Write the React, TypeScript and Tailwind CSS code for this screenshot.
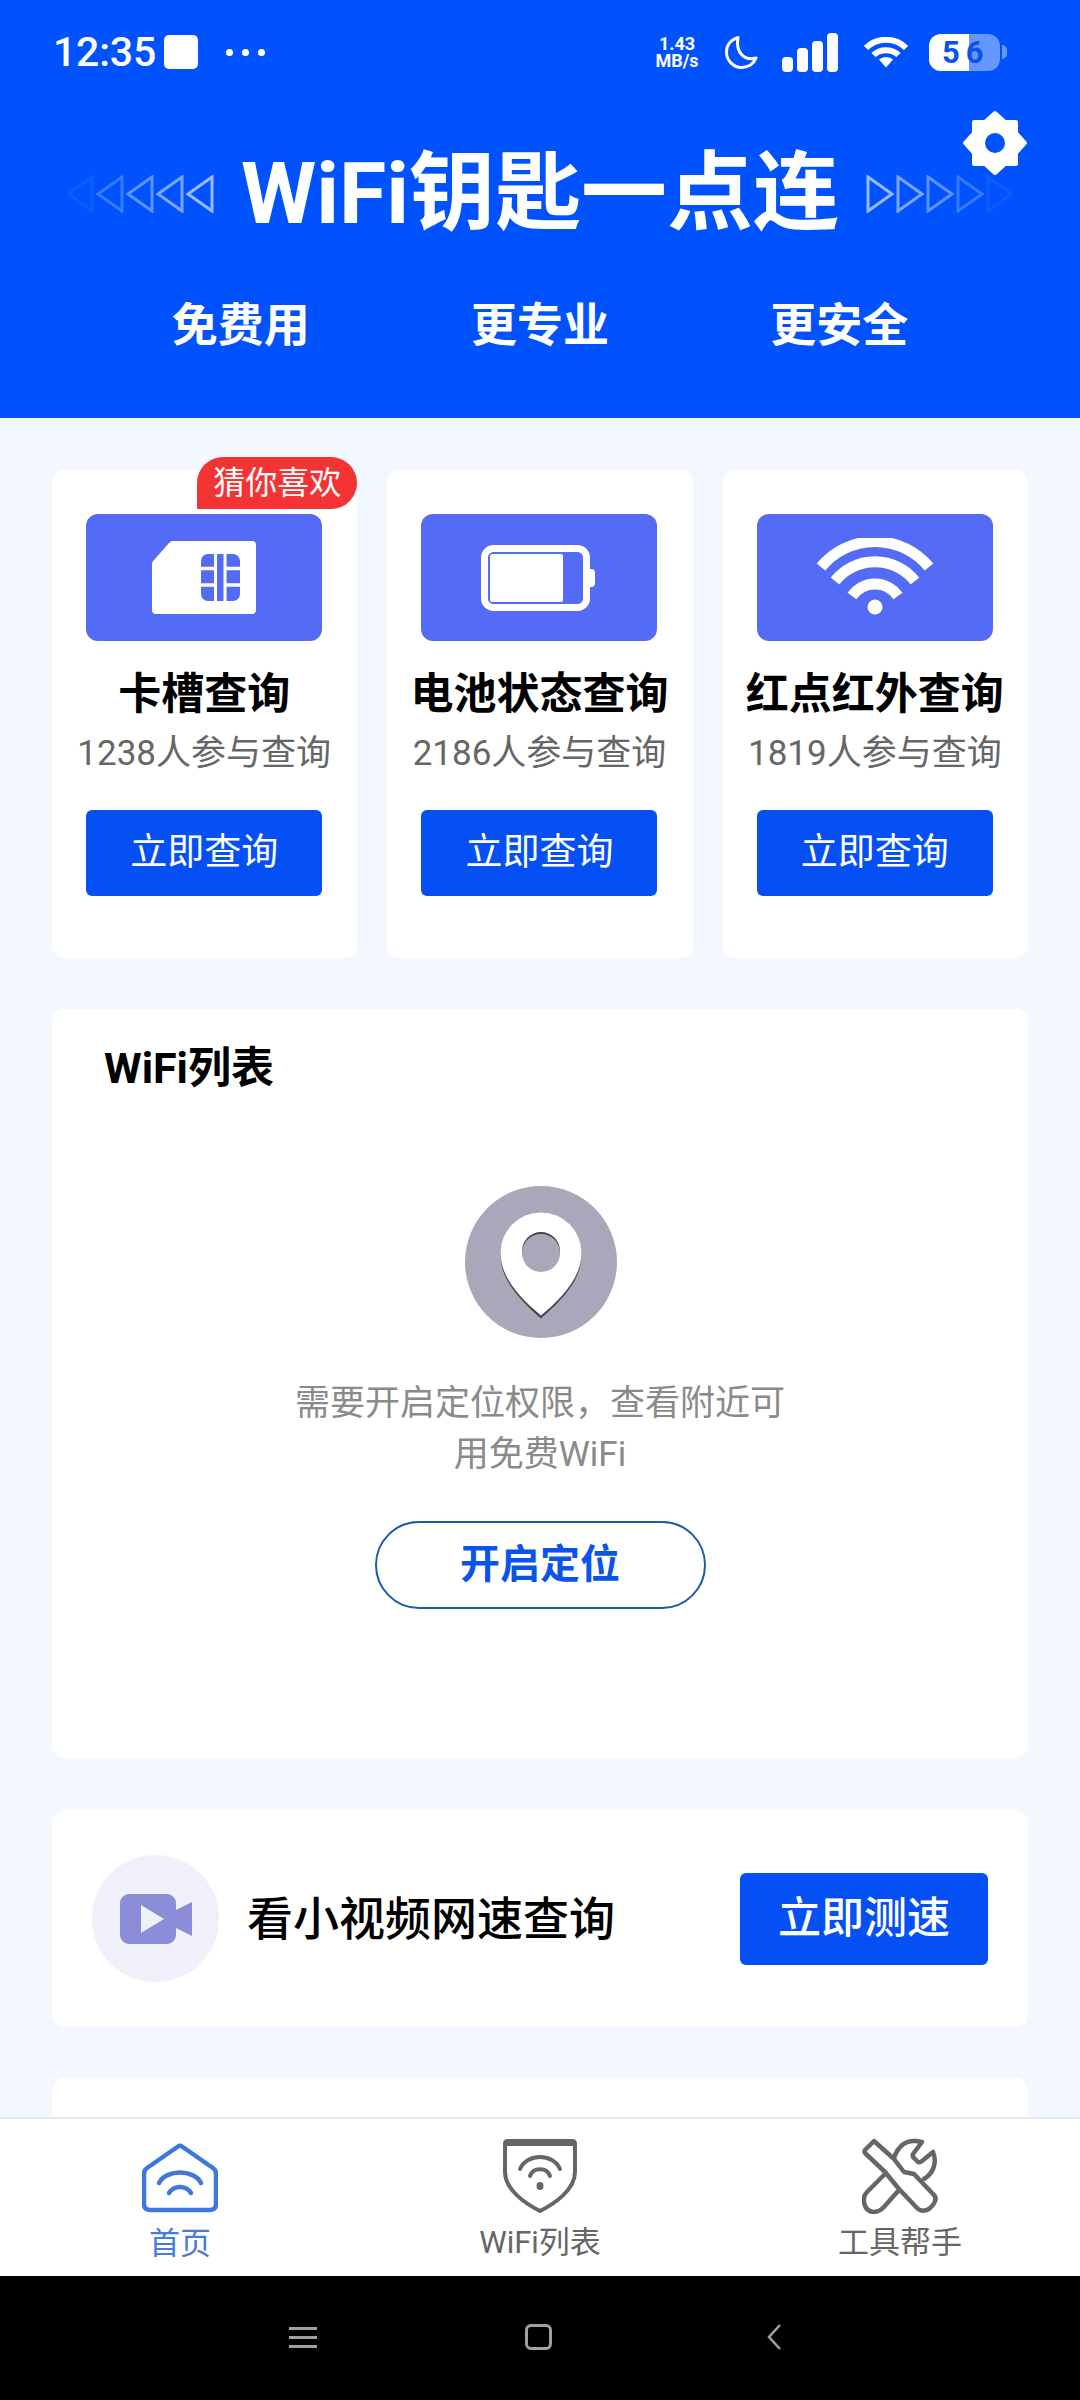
const font = { fontFamily: 'Roboto, "Noto Sans CJK SC", sans-serif' };

function Arrows({ dir }: { dir: "left" | "right" }) {
  // five outlined triangles, fading away from the title
  const ops = [0.6, 0.48, 0.36, 0.22, 0.06];
  return (
    <svg width="146" height="38" viewBox="0 0 146 38" fill="none" className="shrink-0">
      {ops.map((o, i) =>
        dir === "right" ? (
          <path key={i} d={`M${2 + i * 30} 2 L${26 + i * 30} 19 L${2 + i * 30} 36 Z`} stroke="#fff" strokeOpacity={o} strokeWidth="3" />
        ) : (
          <path key={i} d={`M${144 - i * 30} 2 L${120 - i * 30} 19 L${144 - i * 30} 36 Z`} stroke="#fff" strokeOpacity={o} strokeWidth="3" />
        )
      )}
    </svg>
  );
}

function StatusBar() {
  return (
    <div className="flex h-[104px] items-center pl-[53px] pr-[73px] text-white">
      <span className="text-[41px] font-medium leading-none tracking-[-0.2px]">12:35</span>
      <div className="ml-[8px] h-[34px] w-[34px] rounded-[5px] bg-white" />
      <div className="ml-[28px] flex gap-[9px]">
        <div className="h-[7px] w-[7px] rounded-full bg-white" />
        <div className="h-[7px] w-[7px] rounded-full bg-white" />
        <div className="h-[7px] w-[7px] rounded-full bg-white" />
      </div>
      <div className="ml-auto flex items-center">
        <div className="flex w-[46px] flex-col items-center text-[18px] font-bold leading-[17px]">
          <span>1.43</span>
          <span>MB/s</span>
        </div>
        <svg className="ml-[24px]" width="34" height="35" viewBox="0 0 34 35" fill="none">
          <path d="M14 2.5 C6 5 2 11 2.5 18 C3 26 10 33 18 32.5 C25 32 30 28 32 23 C22 26 11 19 14 2.5 Z" stroke="#fff" strokeWidth="3" strokeLinejoin="round" />
        </svg>
        <div className="ml-[24px] flex items-end gap-[4px]">
          <div className="h-[15px] w-[11px] rounded-[4px] bg-white" />
          <div className="h-[24px] w-[11px] rounded-[4px] bg-white" />
          <div className="h-[31px] w-[11px] rounded-[4px] bg-white" />
          <div className="h-[39px] w-[11px] rounded-[4px] bg-white" />
        </div>
        <svg className="ml-[26px]" width="44" height="31" viewBox="0 0 44 31" fill="none">
          <path d="M2 11 C13 0 31 0 42 11" stroke="#fff" strokeWidth="6" />
          <path d="M9.5 18 C16 11.500 28 11.500 34.500 18" stroke="#fff" strokeWidth="6" />
          <path d="M15 22.500 L22 30.500 L29 22.500 C25 19 19 19 15 22.500 Z" fill="#fff" />
        </svg>
        <div className="relative ml-[21px] flex h-[37px] w-[71px] overflow-hidden rounded-[12px] bg-white/40">
          <div className="h-full w-[40px] bg-white" />
          <span className="absolute left-[13px] top-0 text-[31px] font-bold leading-[37px] tracking-[6px] text-[#0a52e8]">56</span>
        </div>
        <div className="ml-[2px] h-[14px] w-[5px] rounded-r-full bg-white/40" />
      </div>
    </div>
  );
}

function Header() {
  return (
    <header className="relative h-[418px] shrink-0 bg-[#0052ff] text-white">
      <StatusBar />
      <svg className="absolute right-[52px] top-[110px]" width="66" height="66" viewBox="0 0 66 66">
        <path
          fillRule="evenodd"
          fill="#fff"
          d="M33 3 L43 12 H54 V23 L63 33 L54 43 V54 H43 L33 63 L23 54 H12 V43 L3 33 L12 23 V12 H23 Z M33 21 A12 12 0 1 0 33 45 A12 12 0 1 0 33 21 Z"
          stroke="#fff"
          strokeWidth="4"
          strokeLinejoin="round"
        />
      </svg>
      <div className="mt-[34px] flex h-[112px] items-center justify-center gap-[27px]">
        <Arrows dir="left" />
        <h1 className="text-[86px] font-bold leading-none">WiFi钥匙一点连</h1>
        <Arrows dir="right" />
      </div>
      <div className="mt-[45px] grid grid-cols-3 px-[91px] text-center text-[46px] font-bold leading-[60px]">
        <span>免费用</span>
        <span>更专业</span>
        <span>更安全</span>
      </div>
    </header>
  );
}

function SimIcon() {
  return (
    <svg width="104" height="73" viewBox="0 0 104 73">
      <path d="M22 0 H100 A4 4 0 0 1 104 4 V69 A4 4 0 0 1 100 73 H4 A4 4 0 0 1 0 69 V23 A5 5 0 0 1 2 19 L17 2 A6 6 0 0 1 22 0 Z" fill="#fff" />
      <rect x="49" y="13" width="39" height="47" rx="7" fill="#546cf5" />
      <path d="M63.500 13 V60 M73 13 V60" stroke="#fff" strokeWidth="3" />
      <path d="M49 27.500 H63 M49 44 H63 M73 27.500 H88 M73 44 H88" stroke="#fff" strokeWidth="3.500" />
    </svg>
  );
}

function BatteryIcon() {
  return (
    <svg className="mr-[2px]" width="114" height="66" viewBox="0 0 114 66" fill="none">
      <rect x="3.500" y="3.500" width="102" height="59" rx="9" stroke="#fff" strokeWidth="7" />
      <rect x="9" y="9" width="73" height="48" rx="2" fill="#fff" />
      <path d="M109 24 H110 A4 4 0 0 1 114 28 V38 A4 4 0 0 1 110 42 H109 Z" fill="#fff" />
    </svg>
  );
}

function WifiIcon() {
  return (
    <svg width="120" height="80" viewBox="0 0 120 80" fill="none">
      <path d="M6 29 A70 70 0 0 1 114 29" stroke="#fff" strokeWidth="11" />
      <path d="M20 43 A51 51 0 0 1 100 43" stroke="#fff" strokeWidth="11" />
      <path d="M37 58 A28 28 0 0 1 83 58" stroke="#fff" strokeWidth="11" />
      <circle cx="60" cy="69" r="7.500" fill="#fff" />
    </svg>
  );
}

const tools = [
  { title: "卡槽查询", sub: "1238人参与查询", icon: <SimIcon />, badge: true },
  { title: "电池状态查询", sub: "2186人参与查询", icon: <BatteryIcon />, badge: false },
  { title: "红点红外查询", sub: "1819人参与查询", icon: <WifiIcon />, badge: false },
];

function ToolCard({ title, sub, icon, badge }: (typeof tools)[number]) {
  return (
    <div className="relative flex h-[488px] flex-col items-center rounded-[12px] bg-white pr-[1px] pt-[44px]">
      {badge && (
        <span className="absolute right-0 -top-[13px] flex h-[52px] w-[160px] items-center justify-center rounded-r-full rounded-tl-full bg-[#f43434] text-[32px] leading-none text-white">
          猜你喜欢
        </span>
      )}
      <div className="flex h-[127px] w-[236px] items-center justify-center rounded-[12px] bg-[#546cf5]">{icon}</div>
      <h3 className="mt-[28px] whitespace-nowrap text-[43px] font-bold leading-[50px] text-black">{title}</h3>
      <p className="mt-[10px] whitespace-nowrap text-[35px] leading-[50px] text-[#666]">{sub}</p>
      <button className="mt-[31px] h-[86px] w-[236px] rounded-[6px] bg-[#0550f5] text-[37px] text-white">立即查询</button>
    </div>
  );
}

function WifiList() {
  return (
    <section className="mt-[51px] flex h-[749px] flex-col items-center rounded-[12px] bg-white">
      <h2 className="mt-[34px] self-start pl-[52px] text-[43px] font-bold leading-[50px] text-black">WiFi列表</h2>
      <svg className="ml-[2px] mt-[93px]" width="152" height="152" viewBox="0 0 152 152">
        <circle cx="76" cy="76" r="76" fill="#a9a8ba" />
        <path d="M76 132.500 C60 118 35.500 97 35.500 69 A40.500 40.500 0 0 1 116.500 69 C116.500 97 92 118 76 132.500 Z" fill="#45444f" />
        <path d="M76 129.500 C60 116 35.500 94 35.500 67 A40.500 40.500 0 0 1 116.500 67 C116.500 94 92 116 76 129.500 Z" fill="#fff" />
        <circle cx="76" cy="65" r="19" fill="#45444f" />
        <circle cx="76" cy="67" r="19" fill="#a9a8ba" />
      </svg>
      <p className="mt-[40px] w-[490px] text-center text-[35px] leading-[51px] text-[#8a8a8a]">需要开启定位权限，查看附近可用免费WiFi</p>
      <button className="mt-[41px] h-[88px] w-[331px] rounded-full border-2 border-[#1f5aa8] text-[40px] font-bold text-[#0a55e8]">开启定位</button>
    </section>
  );
}

function SpeedRow() {
  return (
    <section className="mt-[52px] flex h-[217px] items-center rounded-[12px] bg-white pl-[40px] pr-[40px]">
      <div className="flex h-[127px] w-[127px] items-center justify-center rounded-full bg-[#eff0f9]">
        <svg width="72" height="50" viewBox="0 0 72 50">
          <path d="M9 0 H47 A9 9 0 0 1 56 9 V16 L72 8 V42 L56 34 V41 A9 9 0 0 1 47 50 H9 A9 9 0 0 1 0 41 V9 A9 9 0 0 1 9 0 Z" fill="#8c8dd8" />
          <path d="M21 11 L44 25 L21 39 Z" fill="#eff0f9" />
        </svg>
      </div>
      <span className="ml-[28px] pt-[1px] text-[46px] font-medium text-black">看小视频网速查询</span>
      <button className="ml-auto h-[92px] w-[248px] rounded-[6px] bg-[#0550f5] text-[43px] font-medium text-white">立即测速</button>
    </section>
  );
}

function TabBar() {
  return (
    <nav className="grid h-[159px] shrink-0 grid-cols-3 border-t-2 border-[#e4e9ee] bg-white pt-[19px] text-center text-[31px] leading-[40px] text-[#666]">
      <div className="flex flex-col items-center text-[#4a7bd8]">
        <svg className="mt-[5px]" width="76" height="70" viewBox="0 0 76 70" fill="none" stroke="#3f78dc" strokeWidth="4.500" strokeLinecap="round" strokeLinejoin="round">
          <path d="M36 3.500 Q38 2 40 3.500 L71 25 Q74 27 74 31 V61 Q74 67 68 67 H8 Q2 67 2 61 V31 Q2 27 5 25 Z" />
          <path d="M17 40 C24 26 52 26 59 40" />
          <path d="M27 50 C32 42 44 42 49 50" />
        </svg>
        <span className="mt-[11px]">首页</span>
      </div>
      <div className="flex flex-col items-center">
        <svg width="76" height="76" viewBox="0 0 76 76" fill="none" stroke="#666" strokeWidth="4" strokeLinejoin="round">
          <path d="M3 6 Q3 3 6 3 H70 Q73 3 73 6 V34 C73 52 52 66 38 73 C24 66 3 52 3 34 Z" />
          <path d="M3 5 H73" strokeWidth="6" />
          <path d="M18 31 C25 15 51 15 58 31" strokeLinecap="round" />
          <path d="M28 38 C31 29 45 29 48 38" strokeLinecap="round" />
          <ellipse cx="38" cy="48" rx="3.500" ry="4" fill="#666" stroke="none" />
        </svg>
        <span className="mt-[9px]">WiFi列表</span>
      </div>
      <div className="flex flex-col items-center">
        <svg width="76" height="76" viewBox="0 0 76 76" fill="none" stroke="#666" strokeWidth="4.500" strokeLinejoin="round" strokeLinecap="round">
          <path d="M12 3 L3 12 Q2 14 3 15 L23 34 L37 51 L55 70 Q60 75 67 71 L71 67 Q76 60 71 56 L52 36 L42 34 L32 21 Z" />
          <path d="M32 20 C36 8 44 2 54 3 L60 4 L51 16 Q50 18 52 20 L56 24 Q58 25 60 23 L71 14 C75 24 72 35 62 41" />
          <path d="M24 35 L5 54 C-1 60 2 74 12 74 C16 74 19 72 21 70 L37 52" />
        </svg>
        <span className="mt-[9px]">工具帮手</span>
      </div>
    </nav>
  );
}

function NavBar() {
  return (
    <div className="flex h-[124px] shrink-0 items-center bg-black pb-[2px]">
      <div className="ml-[289px] flex w-[28px] flex-col gap-[6px]">
        <div className="h-[3px] bg-[#a0a0a0]" />
        <div className="h-[3px] bg-[#a0a0a0]" />
        <div className="h-[3px] bg-[#a0a0a0]" />
      </div>
      <div className="ml-[208px] h-[26px] w-[27px] rounded-[6px] border-[3px] border-[#a0a0a0]" />
      <svg className="ml-[214px]" width="16" height="28" viewBox="0 0 16 28" fill="none">
        <path d="M14 2 L3 14 L14 26" stroke="#a0a0a0" strokeWidth="2.500" />
      </svg>
    </div>
  );
}

export default function App() {
  return (
    <div className="flex h-[2400px] w-[1080px] flex-col overflow-hidden bg-[#f3f8fe]" style={font}>
      <Header />
      <main className="min-h-0 flex-1 overflow-hidden px-[52px] pt-[52px]">
        <div className="grid grid-cols-3 gap-[30px]">
          {tools.map((t) => (
            <ToolCard key={t.title} {...t} />
          ))}
        </div>
        <WifiList />
        <SpeedRow />
        <div className="mt-[51px] h-[100px] rounded-[12px] bg-white" />
      </main>
      <TabBar />
      <NavBar />
    </div>
  );
}
